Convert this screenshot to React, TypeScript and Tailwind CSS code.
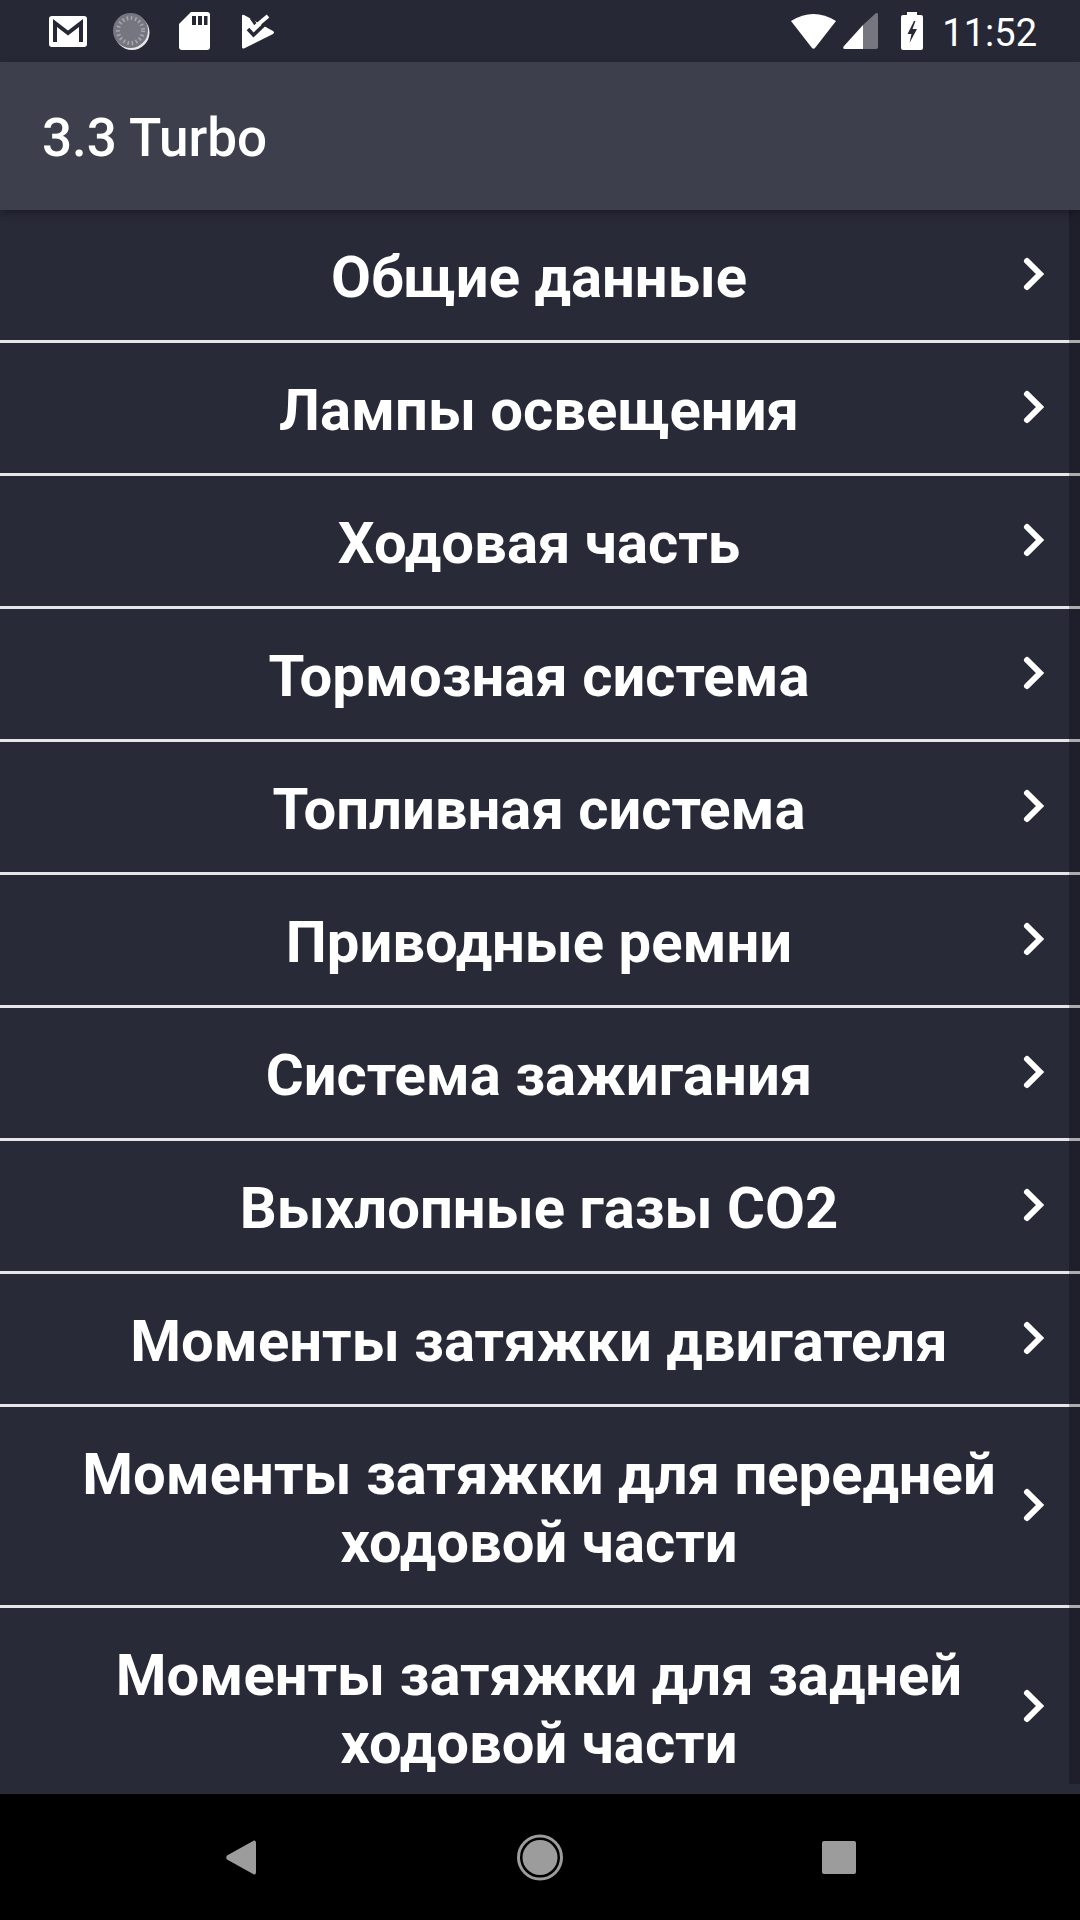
const rows = [
  ["Общие данные"],
  ["Лампы освещения"],
  ["Ходовая часть"],
  ["Тормозная система"],
  ["Топливная система"],
  ["Приводные ремни"],
  ["Система зажигания"],
  ["Выхлопные газы CO2"],
  ["Моменты затяжки двигателя"],
  ["Моменты затяжки для передней", "ходовой части"],
  ["Моменты затяжки для задней", "ходовой части"],
];

function Row({ lines }: { lines: string[] }) {
  return (
    <div
      className={`relative flex items-center justify-center border-b-[3px] border-[#e6e6e8] shrink-0 ${
        lines.length > 1 ? "h-[201px]" : "h-[133px]"
      }`}
    >
      <div className="pt-[4px] pr-[2px] text-center text-[58px] leading-[68px] font-bold text-white">
        {lines.map((l) => (
          <div key={l}>{l}</div>
        ))}
      </div>
      <svg className="absolute right-[34px] w-[24px] h-[36px] -translate-y-px" viewBox="0 0 24 36" fill="none">
        <path d="M5 5 L18 18 L5 31" stroke="white" strokeWidth="6" strokeLinecap="round" strokeLinejoin="miter" />
      </svg>
    </div>
  );
}

function StatusLeft() {
  return (
    <div className="flex items-center pl-[49px]">
      {/* gmail */}
      <svg width="38" height="31" viewBox="0 0 38 31" className="mr-[26px]">
        <rect width="38" height="31" rx="3" fill="white" />
        <path d="M6 26 V7 L19 17 L32 7 V26" fill="none" stroke="#262836" strokeWidth="4" />
      </svg>
      {/* loading circle */}
      <svg width="37" height="37" viewBox="0 0 37 37" className="mr-[29px]">
        <circle cx="19" cy="19.5" r="17.5" fill="#e8e8ea" />
        <circle cx="17.5" cy="17.5" r="17.5" fill="#75767f" />
        <circle cx="17.5" cy="17.5" r="12.5" fill="none" stroke="#a5a6ac" strokeWidth="4" strokeDasharray="1.6 2.6" />
      </svg>
      {/* sd card */}
      <svg width="31" height="38" viewBox="0 0 31 38" className="mr-[32px]">
        <path d="M12 0 H28 A3 3 0 0 1 31 3 V35 A3 3 0 0 1 28 38 H3 A3 3 0 0 1 0 35 V12 Z" fill="white" />
        <path d="M13 4 h4 v9 h-4 Z M19 4 h4 v9 h-4 Z M25 4 h3.5 v9 h-3.5 Z" fill="#262836" />
      </svg>
      {/* play-like check */}
      <svg width="33" height="35" viewBox="0 0 33 35">
        <path d="M0 2 Q0 0 2 1 L31 17 Q33 18.5 31 20 L2 34.5 Q0 35 0 33 Z" fill="white" />
        <path d="M9 4 L14 11" fill="none" stroke="#262836" strokeWidth="3" />
        <path d="M12 14 L26 2" fill="none" stroke="white" strokeWidth="4" />
        <path d="M6 15 L11.5 21 L23 10" fill="none" stroke="#262836" strokeWidth="3.5" />
      </svg>
    </div>
  );
}

function StatusRight() {
  return (
    <div className="flex items-center pr-[43px]">
      <svg width="45" height="36" viewBox="0 0 45 36" className="mr-[7px]">
        <path d="M0 8 Q22.5 -6 45 8 L24 35 Q22.5 36.5 21 35 Z" fill="white" />
      </svg>
      <svg width="35" height="36" viewBox="0 0 35 36" className="mr-[23px]">
        <path d="M20 12 L33 0 Q35 -1 35 2 V34 Q35 36 33 36 H20 Z" fill="#75767f" />
        <path d="M20 12 V36 H2 Q-1 36 1 33 Z" fill="white" />
      </svg>
      <svg width="22" height="38" viewBox="0 0 22 38" className="mr-[19px]">
        <path d="M6 0 H16 V3 H20 Q22 3 22 5 V36 Q22 38 20 38 H2 Q0 38 0 36 V5 Q0 3 2 3 H6 Z" fill="white" />
        <path d="M13 9 L6.5 22 H10.5 L8.5 31 L16 17 H11.5 L14.5 9 Z" fill="#262836" />
      </svg>
      <span className="pt-[3px] text-[38px] leading-none text-white">11:52</span>
    </div>
  );
}

export default function App() {
  return (
    <div className="relative w-[1080px] h-[1920px] flex flex-col bg-[#282a38] font-['Roboto',sans-serif] overflow-hidden">
      <div className="h-[62px] shrink-0 bg-[#262836] flex items-center justify-between">
        <StatusLeft />
        <StatusRight />
      </div>
      <div className="relative z-10 h-[148px] shrink-0 bg-[#3d3f4c] flex items-center pl-[42px] pt-[6px] text-white text-[53px] font-medium shadow-[0_4px_8px_rgba(0,0,0,0.3)]">
        3.3 Turbo
      </div>
      <div className="flex-1 min-h-0 overflow-hidden">
        {rows.map((r) => (
          <Row key={r[0]} lines={r} />
        ))}
      </div>
      {/* scrollbar */}
      <div className="absolute right-0 top-[210px] h-[1574px] w-[11px] bg-black/25" />
      <div className="h-[126px] shrink-0 bg-black grid grid-cols-3 justify-items-center items-center px-[92px]">
        <svg width="30" height="35" viewBox="0 0 30 35">
          <path d="M28 0.5 Q30 0 30 3 V32 Q30 35 28 34.5 L1 19.5 Q-0.5 17.5 1 15.5 Z" fill="#9c9c9c" />
        </svg>
        <svg width="46" height="47" viewBox="0 0 46 47">
          <circle cx="23" cy="23.5" r="21.5" fill="none" stroke="#9c9c9c" strokeWidth="3" />
          <circle cx="23" cy="23.5" r="17.5" fill="#9c9c9c" />
        </svg>
        <div className="w-[34px] h-[33px] rounded-[2px] bg-[#9c9c9c]" />
      </div>
    </div>
  );
}
